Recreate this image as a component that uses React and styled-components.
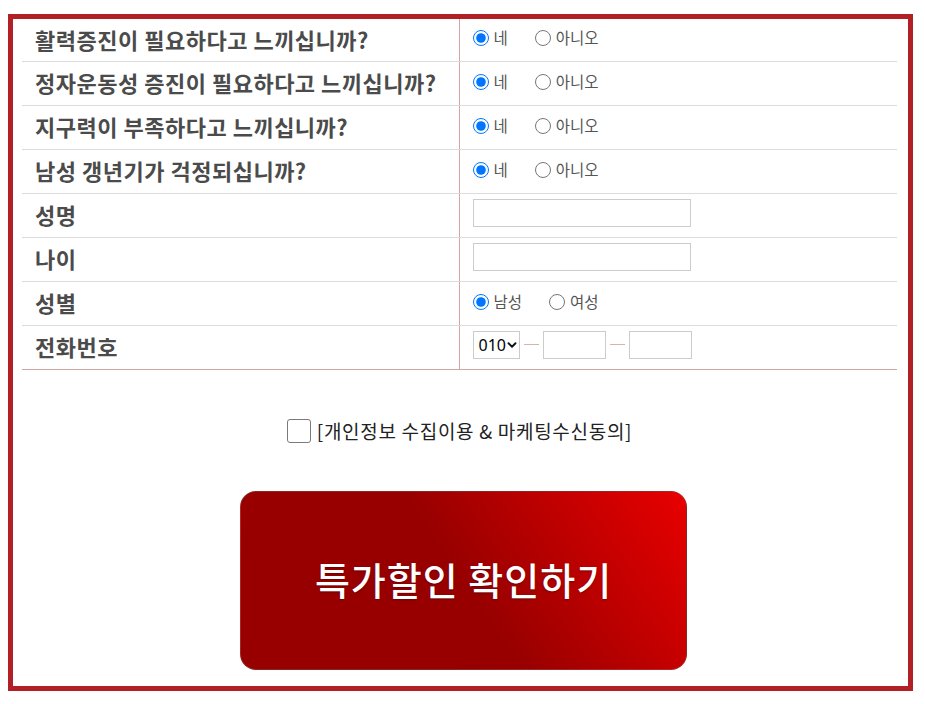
import React from "react";
import styled, { createGlobalStyle } from "styled-components";
import { ChevronDown } from "lucide-react";

const Global = createGlobalStyle`
  html, body { margin: 0; padding: 0; background: #fff; }
  body { font-family: "Noto Sans CJK KR", "Noto Sans", sans-serif; }
  * { box-sizing: border-box; }
`;

const Page = styled.div`
  padding: 14px 12px 12px 8px;
`;

const Frame = styled.div`
  width: 905px;
  border: 5px solid #b21f24;
  padding: 0 11px 16px 9px;
  background: #fff;
`;

const Table = styled.table`
  width: 100%;
  border-collapse: collapse;
  border-spacing: 0;
  border-bottom: 1px solid #cfa6a6;
`;

const Row = styled.tr`
  td { height: 44px; border-bottom: 1px solid #dcdcdc; }
  &:first-child td { height: 42px; }
  &:last-child td { border-bottom: none; }
`;

const Label = styled.td`
  width: 437px;
  padding: 0 0 2px 13px;
  border-right: 1px solid #d8a3a3;
  font-size: 22px;
  letter-spacing: 0.5px;
  font-weight: 700;
  color: #4b4b4b;
  vertical-align: middle;
  white-space: nowrap;
`;

const Value = styled.td`
  padding: 0 0 5px 13px;
  vertical-align: middle;
`;

const Options = styled.div`
  display: flex;
  align-items: center;
  gap: 27px;
`;

const Option = styled.label`
  display: flex;
  align-items: center;
  gap: 5px;
  font-size: 15.5px;
  color: #555;
  line-height: 18px;
`;

const Radio = styled.input.attrs({ type: "radio" })`
  width: 16px;
  height: 16px;
  margin: 2px 0 0 0;
  accent-color: #0075ff;
`;

const TextInput = styled.input.attrs({ type: "text" })`
  display: block;
  width: ${(p) => p.$w}px;
  height: 28px;
  border: 1px solid #cccccc;
  border-radius: 0;
  padding: 0 6px;
  font-size: 15px;
  background: #fff;
`;

const PhoneLine = styled.div`
  display: flex;
  align-items: center;
  gap: 4px;
`;

const SelectWrap = styled.div`
  position: relative;
  width: 47px;
  height: 28px;
`;

const Select = styled.select`
  appearance: none;
  width: 100%;
  height: 100%;
  border: 1px solid #cccccc;
  border-radius: 0;
  padding: 0 0 0 5px;
  font-family: "Noto Sans", sans-serif;
  font-size: 16px;
  color: #000;
  background: #fff;
`;

const Caret = styled(ChevronDown)`
  position: absolute;
  right: 1px;
  top: 7px;
  pointer-events: none;
  color: #111;
`;

const Dash = styled.span`
  display: block;
  width: 15px;
  height: 1px;
  background: #d9b1ae;
`;

const Agree = styled.label`
  display: flex;
  justify-content: center;
  align-items: center;
  gap: 6px;
  margin-top: 49px;
  font-size: 19px;
  letter-spacing: 0.7px;
  color: #222;
  line-height: 24px;
`;

const Check = styled.input.attrs({ type: "checkbox" })`
  appearance: none;
  width: 24px;
  height: 24px;
  margin: 0;
  border: 1px solid #7a7a7a;
  border-radius: 3px;
  background: #fff;
`;

const ButtonRow = styled.div`
  display: flex;
  justify-content: center;
  padding-left: 8px;
  margin-top: 48px;
`;

const Submit = styled.button`
  display: flex;
  align-items: center;
  justify-content: center;
  width: 447px;
  height: 179px;
  border: 1px solid rgba(110, 110, 110, 0.35);
  border-radius: 16px;
  background: linear-gradient(56deg, #980000 0%, #980000 50%, #e80000 100%);
  color: #fff;
  font-family: "Noto Sans CJK KR", sans-serif;
  font-size: 38px;
  letter-spacing: 1px;
  font-weight: 500;
  padding: 0 0 4px;
  text-shadow: 0 1px 2px rgba(60, 0, 0, 0.5);
  cursor: pointer;
`;

const yesNo = [
  "활력증진이 필요하다고 느끼십니까?",
  "정자운동성 증진이 필요하다고 느끼십니까?",
  "지구력이 부족하다고 느끼십니까?",
  "남성 갱년기가 걱정되십니까?",
];

export default function App() {
  return (
    <Page>
      <Global />
      <Frame>
        <Table>
          <tbody>
            {yesNo.map((q, i) => (
              <Row key={q}>
                <Label>{q}</Label>
                <Value>
                  <Options>
                    <Option>
                      <Radio name={`q${i}`} defaultChecked />네
                    </Option>
                    <Option>
                      <Radio name={`q${i}`} />아니오
                    </Option>
                  </Options>
                </Value>
              </Row>
            ))}
            <Row>
              <Label>성명</Label>
              <Value>
                <TextInput $w={218} />
              </Value>
            </Row>
            <Row>
              <Label>나이</Label>
              <Value>
                <TextInput $w={218} />
              </Value>
            </Row>
            <Row>
              <Label>성별</Label>
              <Value>
                <Options>
                  <Option>
                    <Radio name="sex" defaultChecked />남성
                  </Option>
                  <Option>
                    <Radio name="sex" />여성
                  </Option>
                </Options>
              </Value>
            </Row>
            <Row>
              <Label>전화번호</Label>
              <Value>
                <PhoneLine>
                  <SelectWrap>
                    <Select defaultValue="010">
                      <option>010</option>
                      <option>011</option>
                      <option>016</option>
                      <option>017</option>
                      <option>019</option>
                    </Select>
                    <Caret size={14} strokeWidth={3.2} />
                  </SelectWrap>
                  <Dash />
                  <TextInput $w={63} />
                  <Dash />
                  <TextInput $w={63} />
                </PhoneLine>
              </Value>
            </Row>
          </tbody>
        </Table>
        <Agree>
          <Check />
          [개인정보 수집이용 &amp; 마케팅수신동의]
        </Agree>
        <ButtonRow>
          <Submit type="button">특가할인 확인하기</Submit>
        </ButtonRow>
      </Frame>
    </Page>
  );
}
